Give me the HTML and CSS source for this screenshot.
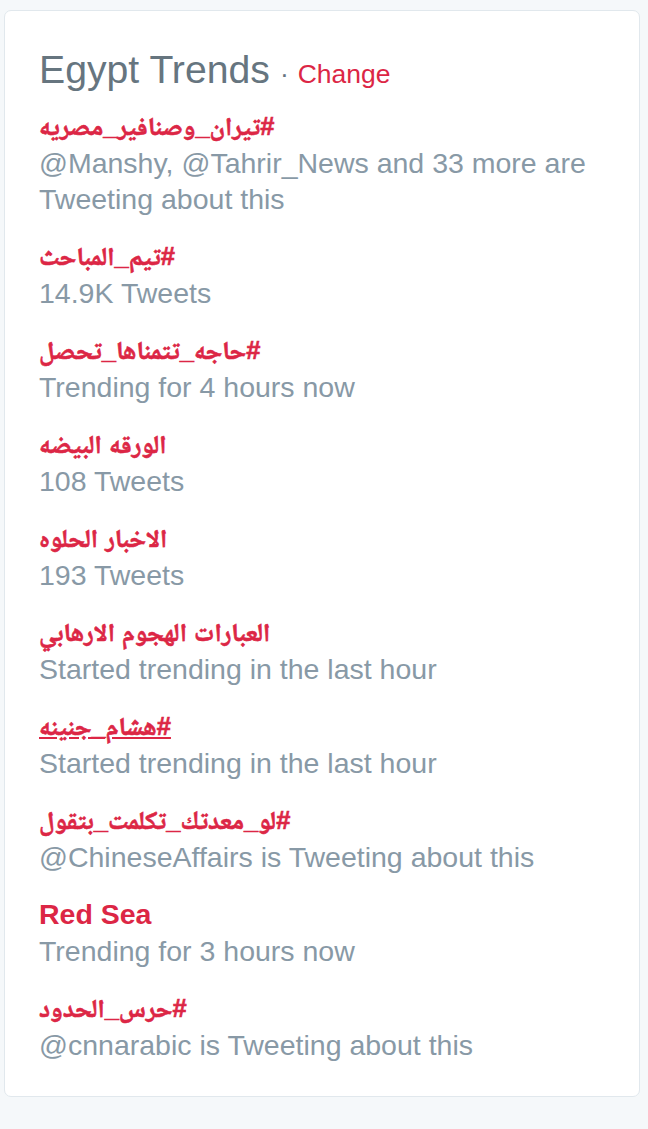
FILE: index.html
```html
<!DOCTYPE html>
<html lang="en">
<head>
  <meta charset="UTF-8" />
  <meta name="viewport" content="width=device-width, initial-scale=1.0">
  <title>Egypt Trends</title>
  <link rel="stylesheet" href="styles.css">
</head>
<body>
  <div class="trends-card">
    <div class="trends-header">
      <span class="trends-title">Egypt Trends</span>
      <span class="dot">·</span>
      <a href="#" class="change-link">Change</a>
    </div>
    <ul class="trend-list">
      <li class="trend-item">
        <a href="#" class="trend-name ar" dir="auto">#تيران_وصنافير_مصريه</a>
        <div class="trend-meta">@Manshy, @Tahrir_News and 33 more are Tweeting about this</div>
      </li>
      <li class="trend-item">
        <a href="#" class="trend-name ar" dir="auto">#تيم_المباحث</a>
        <div class="trend-meta">14.9K Tweets</div>
      </li>
      <li class="trend-item">
        <a href="#" class="trend-name ar" dir="auto">#حاجه_تتمناها_تحصل</a>
        <div class="trend-meta">Trending for 4 hours now</div>
      </li>
      <li class="trend-item">
        <a href="#" class="trend-name ar" dir="auto">الورقه البيضه</a>
        <div class="trend-meta">108 Tweets</div>
      </li>
      <li class="trend-item">
        <a href="#" class="trend-name ar" dir="auto">الاخبار الحلوه</a>
        <div class="trend-meta">193 Tweets</div>
      </li>
      <li class="trend-item">
        <a href="#" class="trend-name ar" dir="auto">العبارات الهجوم الارهابي</a>
        <div class="trend-meta">Started trending in the last hour</div>
      </li>
      <li class="trend-item">
        <a href="#" class="trend-name ar hovered" dir="auto">#هشام_جنينه</a>
        <div class="trend-meta">Started trending in the last hour</div>
      </li>
      <li class="trend-item">
        <a href="#" class="trend-name ar" dir="auto">#لو_معدتك_تكلمت_بتقول</a>
        <div class="trend-meta">@ChineseAffairs is Tweeting about this</div>
      </li>
      <li class="trend-item">
        <a href="#" class="trend-name">Red Sea</a>
        <div class="trend-meta">Trending for 3 hours now</div>
      </li>
      <li class="trend-item">
        <a href="#" class="trend-name ar" dir="auto">#حرس_الحدود</a>
        <div class="trend-meta">@cnnarabic is Tweeting about this</div>
      </li>
    </ul>
  </div>
</body>
</html>
```

FILE: styles.css
```css
/* Reset */
* { margin: 0; padding: 0; box-sizing: border-box; }
body {
  font-family: 'Liberation Sans', 'Noto Naskh Arabic', 'DejaVu Sans', sans-serif;
  background: #f5f8fa;
  padding: 10px 8px 0 4px;
}
a { text-decoration: none; }

/* Card */
.trends-card {
  background: #fff;
  border: 1px solid #e1e8ed;
  border-radius: 7px;
  padding: 37px 20px 33px 34px;
}
.trends-header {
  display: flex;
  align-items: baseline;
  line-height: 44px;
  color: #66757f;
  margin-bottom: 12px;
}
.trends-title { font-size: 39.2px; }
.dot { font-size: 26.5px; margin: 0 9px 0 10px; }
.change-link { font-size: 26.5px; color: #dc2645; }

/* Trend list */
.trend-list { list-style: none; }
.trend-item { margin-bottom: 21px; }
.trend-item:last-child { margin-bottom: 0; }
.trend-name {
  display: block;
  text-align: left;
  font-size: 28.5px;
  font-weight: 700;
  line-height: 37px;
  color: #dc2645;
}
/* arabic names: naskh is lighter and wider than the original, so shrink + thicken */
.trend-name.ar { font-size: 25.5px; -webkit-text-stroke: 0.6px currentColor; }
.trend-name.hovered { text-decoration: underline; }
.trend-meta {
  font-size: 28.5px;
  line-height: 36px;
  color: #8899a6;
}
```
